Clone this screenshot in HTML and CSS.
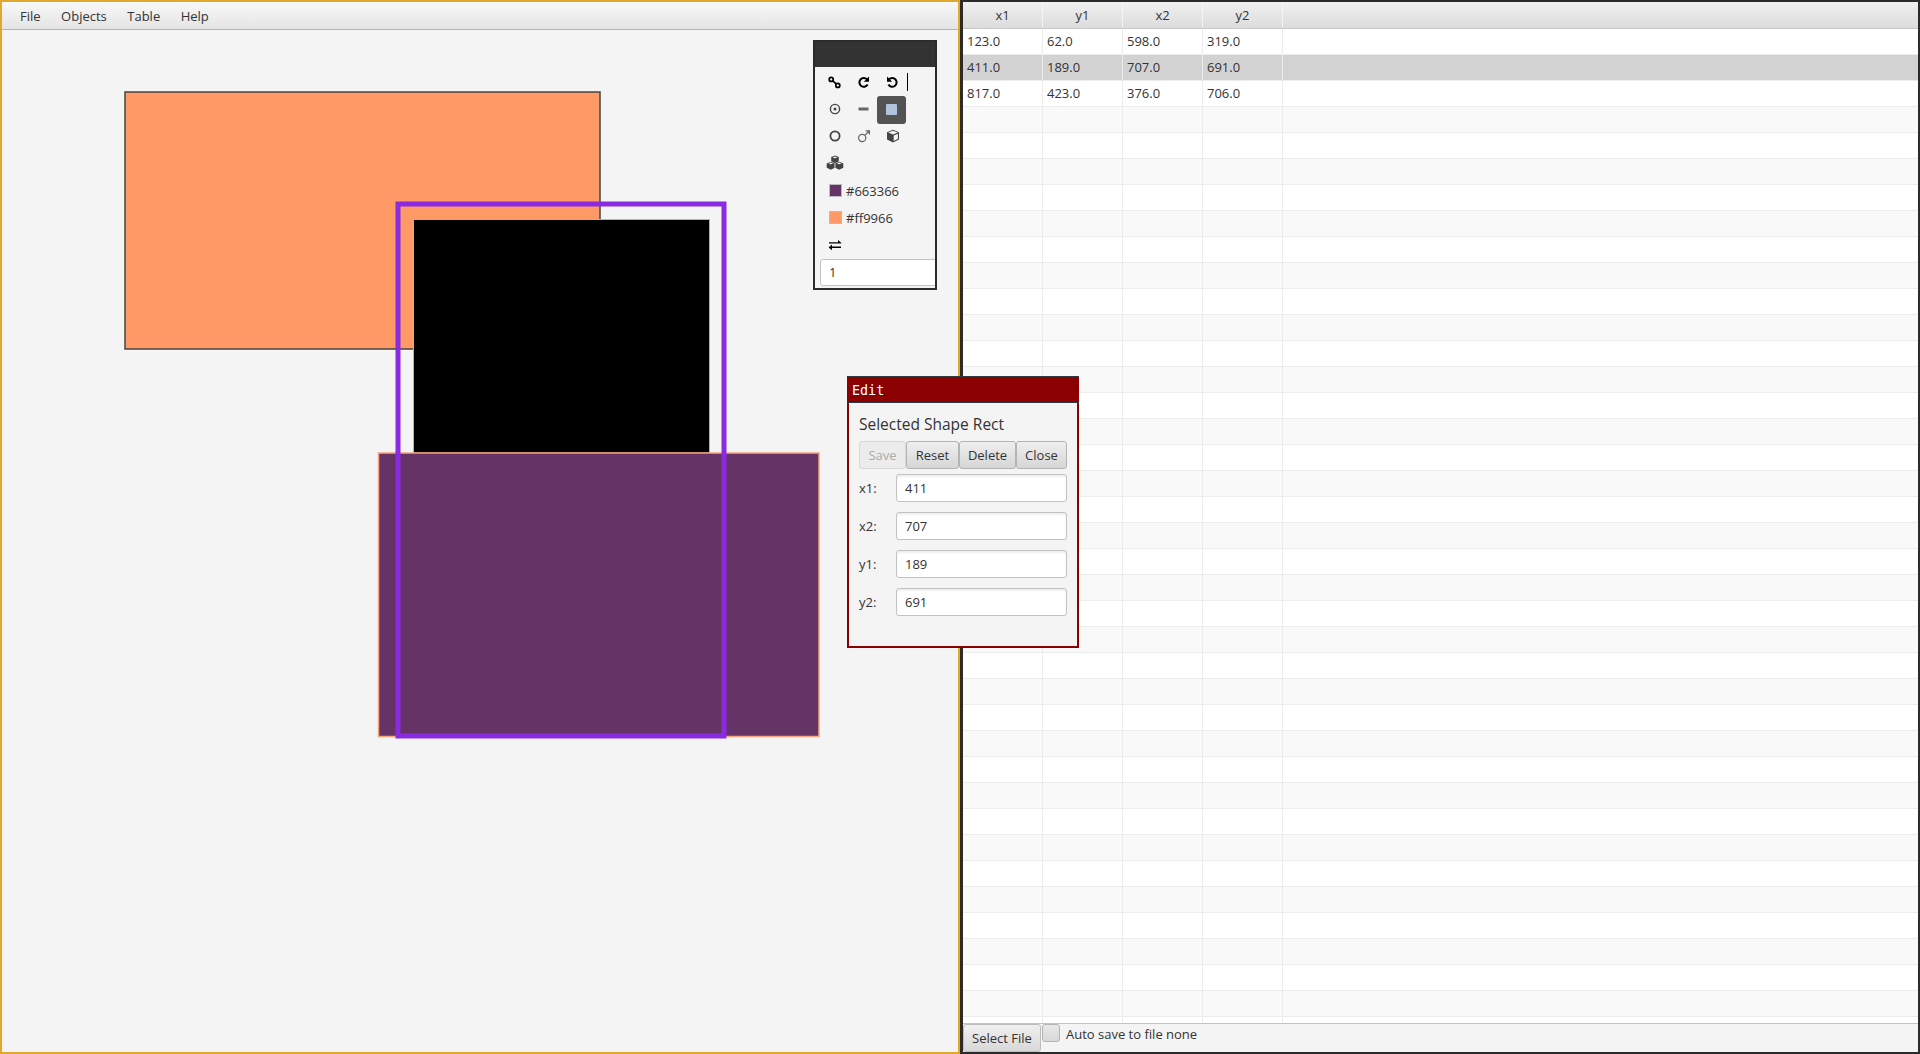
FILE: index.html
```html
<!DOCTYPE html>
<html>
<head>
 <title>Shape Editor</title>
 <link rel="stylesheet" href="styles.css">
</head>
<body>
<div class="app">

 <div class="left_pane">
  <div class="menu_bar">
   <span class="menu_item">File</span>
   <span class="menu_item">Objects</span>
   <span class="menu_item">Table</span>
   <span class="menu_item">Help</span>
  </div>
  <div class="canvas">
   <svg class="shapes" width="956" height="1022" viewBox="0 0 956 1022">
    <rect x="123" y="62" width="475" height="257" fill="#ff9966" stroke="#444" stroke-width="1.5"/>
    <rect x="411.5" y="189.5" width="296" height="233.5" fill="#000" stroke="#ff9966" stroke-width="1"/>
    <rect x="376.5" y="423" width="440.5" height="283.5" fill="#663366" stroke="#f4a57c" stroke-width="1.5"/>
    <rect x="396" y="174" width="326" height="532" fill="none" stroke="#8a2be2" stroke-width="5"/>
   </svg>
  </div>

  <div class="tool_box">
   <div class="tool_head"></div>
   <div class="tool_body">
    <div class="tool_row row_first">
     <span class="tool_btn"><svg width="13" height="13" viewBox="0 0 13 13"><g fill="none" stroke="#000" stroke-width="1.7"><circle cx="3.2" cy="3.4" r="2"/><circle cx="9.8" cy="9.4" r="2"/><path d="M4.8 4.9l3.4 3"/></g></svg></span>
     <span class="tool_btn"><svg width="13" height="13" viewBox="0 0 13 13"><path d="M10.6 8.6A4.4 4.4 0 1 1 10 3.4" fill="none" stroke="#000" stroke-width="2"/><path d="M12 .6v5.2H6.8z" fill="#000"/></svg></span>
     <span class="tool_btn"><svg width="13" height="13" viewBox="0 0 13 13"><path d="M2.4 8.6A4.4 4.4 0 1 0 3 3.4" fill="none" stroke="#000" stroke-width="2"/><path d="M1 .6v5.2h5.2z" fill="#000"/></svg></span>
     <span class="caret"></span>
    </div>
    <div class="tool_row">
     <span class="tool_btn"><svg width="16" height="16" viewBox="0 0 16 16"><circle cx="8" cy="8" r="4.6" fill="none" stroke="#444" stroke-width="1.4"/><circle cx="8" cy="8" r="1.5" fill="#444"/></svg></span>
     <span class="tool_btn"><svg width="16" height="16" viewBox="0 0 16 16"><rect x="2.5" y="6.5" width="10" height="3" fill="#666"/></svg></span>
     <span class="tool_btn tool_on"><span class="tool_square"></span></span>
    </div>
    <div class="tool_row">
     <span class="tool_btn"><svg width="16" height="16" viewBox="0 0 16 16"><circle cx="8" cy="8" r="4.6" fill="none" stroke="#444" stroke-width="1.8"/></svg></span>
     <span class="tool_btn"><svg width="16" height="16" viewBox="0 0 16 16"><g fill="none" stroke="#666" stroke-width="1.2"><circle cx="6.2" cy="10" r="3.6"/><path d="M8.8 7.4l4.4-4.4M9.6 2.8h3.8v3.8"/></g></svg></span>
     <span class="tool_btn"><svg width="16" height="16" viewBox="0 0 16 16"><path d="M8 1.8l6 2.4v7.2L8 14.6l-6-3.2V4.2z" fill="#444"/><path d="M3.2 4.6L8 6.5l4.8-1.9L8 2.8z" fill="#f4f4f4"/><path d="M8.7 7.4l4.2-1.7v5l-4.2 2.2z" fill="#f4f4f4"/></svg></span>
    </div>
    <div class="tool_row row_cubes">
     <span class="tool_btn"><svg width="18" height="16" viewBox="0 0 18 16"><path d="M9 .6l3.8 1.5v4.2L9 8.2 5.2 6.3V2.1z" fill="#444"/><path d="M4.8 6.8l4.1 1.6v4.3l-4.1 2.1-4.1-2.1V8.4z" fill="#444"/><path d="M13.2 6.8l4.1 1.6v4.3l-4.1 2.1-4.1-2.1V8.4z" fill="#444"/><path d="M6.8 2.4L9 3.2l2.2-.8L9 1.6zM2.6 8.4l2.2.8 2.2-.8-2.2-.8zM11 8.4l2.2.8 2.2-.8-2.2-.8z" fill="#f4f4f4"/><path d="M8.9 8.3v4.6" stroke="#f4f4f4" stroke-width=".7"/></svg></span>
    </div>
    <div class="color_row"><span class="swatch swatch_fill"></span><span>#663366</span></div>
    <div class="color_row"><span class="swatch swatch_line"></span><span>#ff9966</span></div>
    <div class="tool_row">
     <span class="tool_btn"><svg width="16" height="16" viewBox="0 0 16 16"><path d="M2 5.2h9V3l3.4 3-0.2.4H2zM14 9.4H5V7.4L1.6 10.4 5 13.2v-2.2h9z" fill="#000"/></svg></span>
    </div>
    <div class="width_input">1</div>
   </div>
  </div>
 </div>

 <div class="right_pane">
  <div class="table_wrap">
   <div class="table_head">
    <div class="head_cell">x1</div>
    <div class="head_cell">y1</div>
    <div class="head_cell">x2</div>
    <div class="head_cell">y2</div>
    <div class="head_rest"></div>
   </div>
   <div class="table_rows" id="rows"></div>
  </div>
  <div class="bottom_bar">
   <div class="file_btn">Select File</div>
   <span class="check_box"></span>
   <span class="check_label">Auto save to file none</span>
  </div>
 </div>

 <div class="edit_box">
  <div class="edit_title">Edit</div>
  <div class="edit_body">
   <div class="edit_heading">Selected Shape Rect</div>
   <div class="edit_buttons">
    <div class="edit_btn btn_save disabled">Save</div>
    <div class="edit_btn btn_reset">Reset</div>
    <div class="edit_btn btn_delete">Delete</div>
    <div class="edit_btn btn_close">Close</div>
   </div>
   <div class="edit_field"><span class="edit_label">x1:</span><div class="edit_input">411</div></div>
   <div class="edit_field"><span class="edit_label">x2:</span><div class="edit_input">707</div></div>
   <div class="edit_field"><span class="edit_label">y1:</span><div class="edit_input">189</div></div>
   <div class="edit_field"><span class="edit_label">y2:</span><div class="edit_input">691</div></div>
  </div>
 </div>

</div>
<script src="table.js"></script>
</body>
</html>
```

FILE: styles.css
```css
html, body {
	margin: 0;
	padding: 0;
	height: 100%;
	overflow: hidden;
}

body {
	font-family: "Open Sans", "Noto Sans", sans-serif;
	font-size: 13px;
	color: #333;
}

.app {
	position: relative;
	display: flex;
	width: 1920px;
	height: 1054px;
	background: #f4f4f4;
}

/* left side */
.left_pane {
	position: relative;
	display: flex;
	flex-direction: column;
	box-sizing: border-box;
	width: 960px;
	height: 1054px;
	border: 2px solid #e0a92e;
}

.menu_bar {
	display: flex;
	flex: none;
	gap: 20.5px;
	box-sizing: border-box;
	height: 28px;
	padding: 0 18px;
	align-items: center;
	background: linear-gradient(to bottom, #f8f8f8 0%, #e4e4e4 100%);
	border-bottom: 1px solid #b4b4b4;
}

.canvas {
	flex: 1;
	background: #f4f4f4;
}

.shapes {
	display: block;
}

/* floating tools */
.tool_box {
	position: absolute;
	left: 811px;
	top: 38px;
	box-sizing: border-box;
	width: 124px;
	height: 250px;
	border: 2px solid #2b2b2b;
	background: #f4f4f4;
	overflow: hidden;
}

.tool_head {
	height: 25px;
	background: #333;
}

.tool_body {
	padding-top: 2px;
}

.tool_row {
	display: flex;
	align-items: center;
	height: 27px;
	padding-left: 5px;
}

.row_first {
	height: 26px;
}

.row_cubes {
	margin-bottom: 1px;
}

.tool_btn {
	display: flex;
	width: 29px;
	height: 27px;
	align-items: center;
	justify-content: center;
}

.tool_on {
	width: 29px;
	height: 28px;
	margin-left: -1px;
	margin-top: 2px;
	background: #535353;
	border-radius: 3px;
}

.tool_square {
	width: 11px;
	height: 11px;
	background: #b0c4de;
	border-radius: 1px;
}

.caret {
	width: 1px;
	height: 18px;
	background: #000;
}

.color_row {
	display: flex;
	align-items: center;
	gap: 4px;
	height: 27px;
	padding-left: 14px;
}

.swatch {
	box-sizing: border-box;
	width: 13px;
	height: 13px;
	border: 1px solid #bbb;
}

.swatch_fill {
	background: #663366;
}

.swatch_line {
	background: #ff9966;
}

.width_input {
	box-sizing: border-box;
	width: 120px;
	height: 27px;
	margin: 1px 0 0 5px;
	padding: 3px 8px;
	background: #fff;
	border: 1px solid #c2c2c2;
	border-radius: 3px;
}

/* right side */
.right_pane {
	display: flex;
	flex-direction: column;
	box-sizing: border-box;
	width: 960px;
	height: 1054px;
	border: 2px solid #2b2b2b;
	border-left-width: 3px;
	background: #f4f4f4;
}

.table_wrap {
	flex: 1;
	overflow: hidden;
}

.table_head {
	display: flex;
	height: 26px;
	background: linear-gradient(to bottom, #f0f0f0 0%, #dcdcdc 100%);
	border-bottom: 1px solid #c8c8c8;
}

.head_cell {
	box-sizing: border-box;
	width: 80px;
	line-height: 27px;
	text-align: center;
	border-right: 1px solid #f4f4f4;
}

.head_rest {
	flex: 1;
}

.table_row {
	display: flex;
	box-sizing: border-box;
	height: 26px;
	background: #f9f9f9;
	border-bottom: 1px solid #ececec;
}

.table_row.even {
	background: #fff;
}

.table_row.picked {
	background: #d2d2d2;
}

.table_cell {
	box-sizing: border-box;
	width: 80px;
	padding-left: 4px;
	line-height: 25px;
	border-right: 1px solid #ececec;
}

.bottom_bar {
	display: flex;
	flex: none;
	box-sizing: border-box;
	height: 29px;
	border-top: 1px solid #c4c4c4;
}

.file_btn {
	box-sizing: border-box;
	width: 78px;
	height: 28px;
	line-height: 27px;
	text-align: center;
	background: linear-gradient(to bottom, #f0f0f0 0%, #d8d8d8 100%);
	border: 1px solid #bcbcbc;
	border-radius: 3px;
}

.check_box {
	box-sizing: border-box;
	width: 18px;
	height: 18px;
	margin-left: 1px;
	background: linear-gradient(to bottom, #e8e8e8 0%, #d8d8d8 100%);
	border: 1px solid #b4b4b4;
	border-radius: 3px;
}

.check_label {
	margin-left: 6px;
	line-height: 20px;
}

/* edit dialog */
.edit_box {
	position: absolute;
	left: 847px;
	top: 376px;
	box-sizing: border-box;
	width: 232px;
	height: 272px;
	border: 2px solid #8b0000;
	border-top: 0;
	background: #f4f4f4;
}

.edit_title {
	box-sizing: border-box;
	height: 27px;
	margin: 0 -2px;
	padding-left: 5px;
	font-family: "DejaVu Sans Mono", monospace;
	font-size: 13.4px;
	line-height: 27px;
	color: #fff;
	background: #8b0000;
	border: 1px solid #2f3a40;
	border-width: 1px 0 1px 0;
}

.edit_body {
	padding: 0 10px;
}

.edit_heading {
	padding-top: 8px;
	font-size: 15.5px;
	line-height: 27px;
	height: 30px;
}

.edit_buttons {
	display: flex;
	margin-bottom: 5px;
}

.edit_btn {
	box-sizing: border-box;
	height: 28px;
	line-height: 26px;
	text-align: center;
	background: linear-gradient(to bottom, #efefef 0%, #d6d6d6 100%);
	border: 1px solid #b4b4b4;
	border-radius: 3px;
}

.btn_save { width: 47px; }
.btn_reset { width: 53px; }
.btn_delete { width: 57px; }
.btn_close { width: 51px; }

.edit_btn.disabled {
	color: #aaa;
	background: #ececec;
	border-color: #d8d8d8;
}

.edit_field {
	display: flex;
	align-items: center;
	height: 28px;
	margin-bottom: 10px;
}

.edit_label {
	width: 37px;
}

.edit_input {
	box-sizing: border-box;
	width: 171px;
	height: 28px;
	padding-left: 8px;
	line-height: 26px;
	background: #fff;
	border: 1px solid #c2c2c2;
	border-radius: 3px;
	box-shadow: inset 0 2px 2px #eee;
}
```

FILE: table.js
```js
// rows of the shape table, blanks fill down to the bottom bar
var data = [
	["123.0", "62.0", "598.0", "319.0"],
	["411.0", "189.0", "707.0", "691.0"],
	["817.0", "423.0", "376.0", "706.0"]
];
var rows = document.getElementById("rows");
for (var i = 0; i < 39; i++) {
	var row = document.createElement("div");
	row.className = "table_row";
	if (i % 2 == 0 || i == 1) row.className += " even";
	if (i == 1) row.className += " picked";
	for (var c = 0; c < 4; c++) {
		var cell = document.createElement("div");
		cell.className = "table_cell";
		cell.textContent = data[i] ? data[i][c] : "";
		row.appendChild(cell);
	}
	rows.appendChild(row);
}
```
